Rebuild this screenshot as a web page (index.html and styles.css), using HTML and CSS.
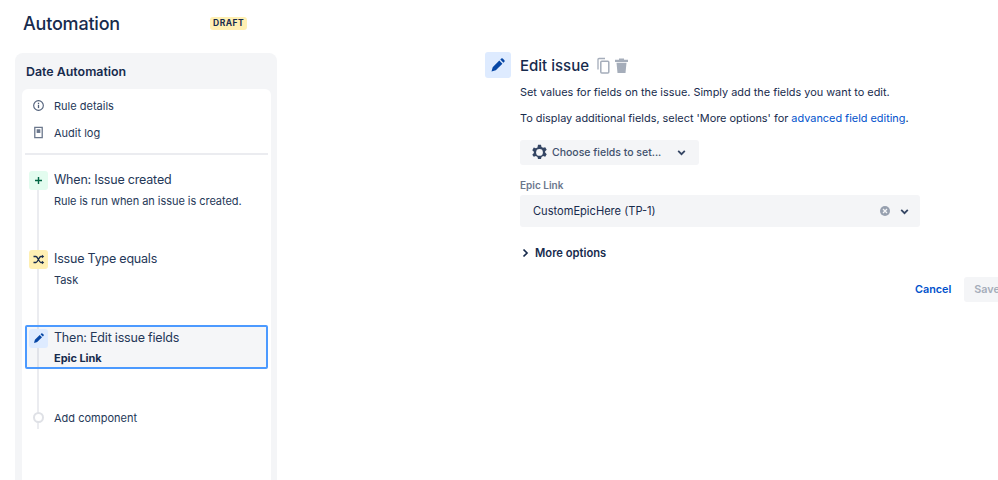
FILE: index.html
```html
<!DOCTYPE html>
<html lang="en">
<head>
<meta charset="utf-8">
<title>Automation</title>
<link rel="stylesheet" href="styles.css">
</head>
<body>
<div class="page">
  <aside class="left">
    <header class="head">
      <h1 class="title">Automation</h1>
      <span class="badge">DRAFT</span>
    </header>
    <section class="sidebar">
      <h2 class="rule-name">Date Automation</h2>
      <div class="panel">
        <div class="nav-row">
          <svg class="nav-icon" viewBox="0 0 14 14"><circle cx="7" cy="7" r="5.200" fill="none" stroke="#505f79" stroke-width="1.200"/><rect x="6.300" y="6.200" width="1.400" height="3.600" fill="#505f79"/><rect x="6.300" y="4" width="1.400" height="1.400" fill="#505f79"/></svg>
          <span>Rule details</span>
        </div>
        <div class="nav-row">
          <svg class="nav-icon" viewBox="0 0 14 14"><path d="M3 1.500h8v11H3z" fill="none" stroke="#6b778c" stroke-width="1.400"/><path d="M5 3.500h4v4H5z" fill="#6b778c"/></svg>
          <span>Audit log</span>
        </div>
        <hr class="divider">
        <div class="steps">
          <div class="rail"></div>
          <div class="step step-when">
            <span class="step-icon ic-green"><svg viewBox="0 0 19 19" width="19" height="19"><path d="M9.500 6v7M6 9.500h7" stroke="#006644" stroke-width="1.400" fill="none"/></svg></span>
            <div class="step-text">
              <div class="step-title">When: Issue created</div>
              <div class="step-sub">Rule is run when an issue is created.</div>
            </div>
          </div>
          <div class="step step-cond">
            <span class="step-icon ic-yellow"><svg viewBox="0 0 19 19" width="19" height="19"><path d="M4.500 6.500h2.500c1.800 0 3 6 4.800 6h1.700M4.500 12.500h2.500c1.800 0 3-6 4.800-6h1.700" stroke="#172b4d" stroke-width="1.300" fill="none"/><path d="M13 4.700 15.200 6.500 13 8.300zM13 10.700 15.200 12.500 13 14.300z" fill="#172b4d"/></svg></span>
            <div class="step-text">
              <div class="step-title">Issue Type equals</div>
              <div class="step-sub">Task</div>
            </div>
          </div>
          <div class="step step-then">
            <span class="step-icon ic-blue"><svg viewBox="0 0 19 19" width="19" height="19"><path d="M5 14l.9-3.200 4.800-4.800 2.300 2.300-4.800 4.800zM11.500 5.200l.8-.8a.8.800 0 0 1 1.100 0l1.200 1.200a.8.800 0 0 1 0 1.100l-.8.800z" fill="#0747a6"/></svg></span>
            <div class="step-text">
              <div class="step-title">Then: Edit issue fields</div>
              <div class="step-sub step-strong">Epic Link</div>
            </div>
          </div>
          <div class="step step-add">
            <span class="add-dot"></span>
            <div class="step-sub">Add component</div>
          </div>
        </div>
      </div>
    </section>
  </aside>
  <main class="right">
    <div class="editor-head">
      <span class="big-icon"><svg viewBox="0 0 26 26" width="26" height="26"><path d="M6.500 19.500l1.200-4.300 6.600-6.600 3.100 3.100-6.600 6.600zM15.300 7.600l1-1a1 1 0 0 1 1.400 0l1.700 1.700a1 1 0 0 1 0 1.400l-1 1z" fill="#0747a6"/></svg></span>
      <h2 class="editor-title">Edit issue</h2>
      <svg class="tool" viewBox="0 0 15 17"><path d="M2 12.500V2.500a1 1 0 0 1 1-1h6" fill="none" stroke="#a5adba" stroke-width="1.300"/><rect x="4.800" y="4.200" width="8" height="11.800" rx="1" fill="none" stroke="#a5adba" stroke-width="1.500"/></svg>
      <svg class="tool" viewBox="0 0 15 17"><path d="M1 2.800h13v2.200H1zM5 1.500h5v1.500H5zM2.500 5.800h10l-1 10.200h-8z" fill="#a5adba"/></svg>
    </div>
    <div class="editor-body">
      <p class="copy copy-1">Set values for fields on the issue. Simply add the fields you want to edit.</p>
      <p class="copy copy-2">To display additional fields, select 'More options' for <a class="link">advanced field editing</a>.</p>
      <div class="choose">
        <svg class="gear" viewBox="0 0 16 16"><path d="M6.600.8h2.800l.5 2 1.500.8 2-.6 1.400 2.400-1.500 1.500v1.200l1.500 1.500-1.400 2.400-2-.6-1.500.8-.5 2H6.600l-.5-2-1.500-.8-2 .6L1.200 10l1.500-1.500V7.300L1.200 5.800 2.600 3.400l2 .6 1.500-.8z" fill="#344563"/><circle cx="8" cy="7.900" r="3.200" fill="#f4f5f7"/></svg>
        <span>Choose fields to set...</span>
        <svg class="chev" viewBox="0 0 10 10"><path d="M2 3.500 5 6.500 8 3.500" fill="none" stroke="#344563" stroke-width="1.600"/></svg>
      </div>
      <label class="field-label">Epic Link</label>
      <div class="select">
        <span class="select-value">CustomEpicHere (TP-1)</span>
        <svg class="clear" viewBox="0 0 12 12"><circle cx="6" cy="6" r="5" fill="#97a0af"/><path d="M4 4l4 4M8 4l-4 4" stroke="#f4f5f7" stroke-width="1.300"/></svg>
        <svg class="chev" viewBox="0 0 10 10"><path d="M2 3.500 5 6.500 8 3.500" fill="none" stroke="#344563" stroke-width="1.600"/></svg>
      </div>
      <div class="more">
        <svg class="more-chev" viewBox="0 0 10 10"><path d="M3.500 1.500 7 5 3.500 8.500" fill="none" stroke="#172b4d" stroke-width="1.700"/></svg>
        <span>More options</span>
      </div>
      <div class="actions">
        <span class="cancel">Cancel</span>
        <span class="save">Save</span>
      </div>
    </div>
  </main>
</div>
</body>
</html>
```

FILE: styles.css
```css
* { box-sizing: border-box; }
html, body { margin: 0; height: 100%; overflow: hidden; background: #fff; }
body { font-family: Inter, "Liberation Sans", sans-serif; color: #172b4d; }
.page { display: flex; width: 998px; height: 480px; overflow: hidden; }

.left { width: 277px; margin-left: 15px; flex: none; }
.head { display: flex; align-items: center; height: 53px; padding: 0 0 6px 8px; }
.title { margin: 0; font-size: 18px; font-weight: 500; letter-spacing: -.2px; width: 187px; }
.badge { background: #fff0b3; color: #172b4d; border-radius: 3px; font-size: 8.500px; font-weight: 700; letter-spacing: .5px; padding: 2px 3px; line-height: 9px; width: 37px; text-align: center; margin-top: -1px; }

.sidebar { background: #f4f5f7; border-radius: 8px 8px 0 0; width: 262px; height: 427px; padding: 0 6px 0 7px; }
.rule-name { margin: 0; font-size: 12.400px; font-weight: 600; height: 36px; line-height: 38px; padding-left: 4px; }
.panel { background: #fff; border-radius: 6px 6px 0 0; height: 391px; padding-top: 3px; }
.nav-row { display: flex; align-items: center; height: 27px; font-size: 11px; color: #253858; padding-left: 10px; gap: 9px; }
.nav-icon { width: 13px; height: 13px; flex: none; }
.divider { border: 0; height: 1.500px; background: #ebecf0; margin: 7px 3px 0; }

.steps { position: relative; padding: 0 3px; }
.rail { position: absolute; left: 14.500px; top: 18px; width: 2px; height: 240px; background: #ebecf0; }
.step { position: relative; display: flex; gap: 6px; padding-left: 4px; }
.step-when { margin-top: 16px; height: 79px; }
.step-cond { height: 75px; }
.step-then { height: 44px; padding-left: 2px; padding-top: 2px; background: rgba(9, 30, 66, .04); border: 2px solid #4c9aff; border-radius: 2px; align-items: flex-start; }
.step-add { margin-top: 41px; align-items: center; gap: 10px; padding-left: 8px; height: 16px; }
.step-icon { width: 19px; height: 19px; border-radius: 3px; flex: none; display: block; }
.step-icon svg { display: block; }
.ic-green { background: #e3fcef; }
.ic-yellow { background: #fff0b3; }
.ic-blue { background: #deebff; }
.step-title { font-size: 12.500px; letter-spacing: -.2px; line-height: 18px; color: #253858; }
.step-sub { font-size: 11px; letter-spacing: -.05px; line-height: 16px; color: #253858; margin-top: 4px; }
.step-add .step-sub { margin-top: 0; letter-spacing: 0; }
.step-then .step-strong { font-weight: 700; color: #172b4d; margin-top: 3px; }
.add-dot { width: 11px; height: 11px; border: 2px solid #dfe1e6; background: #fff; border-radius: 50%; flex: none; }

.right { margin-left: 193px; padding-top: 52px; width: 513px; flex: none; }
.editor-head { display: flex; align-items: center; height: 26px; }
.big-icon { width: 26px; height: 26px; background: #deebff; border-radius: 3px; flex: none; }
.big-icon svg { display: block; }
.editor-title { margin: 0 0 0 9px; font-size: 15px; font-weight: 500; }
.tool { width: 15px; height: 17px; margin-left: 7px; }
.tool + .tool { margin-left: 3px; }
.editor-body { padding-left: 35px; }
.copy { margin: 0; font-size: 10.900px; line-height: 20px; color: #172b4d; }
.copy-1 { margin-top: 4px; }
.copy-2 { margin-top: 6px; }
.link { color: #0052cc; }
.choose { display: flex; align-items: center; width: 179px; height: 25px; background: #f4f5f7; border-radius: 3px; margin-top: 12px; padding-left: 11px; font-size: 10.500px; color: #42526e; font-weight: 500; }
.gear { width: 17px; height: 17px; margin-right: 4px; flex: none; }
.choose .chev { width: 11px; height: 11px; margin-left: 15px; }
.field-label { display: block; margin-top: 14px; font-size: 10px; font-weight: 600; color: #6b778c; line-height: 12px; }
.select { display: flex; align-items: center; width: 400px; height: 32px; background: #f4f5f7; border-radius: 3px; margin-top: 4px; padding: 0 10px 0 13px; }
.select-value { flex: 1; font-size: 11.100px; color: #172b4d; }
.clear { width: 12px; height: 12px; margin-right: 8px; }
.select .chev { width: 11px; height: 11px; }
.more { display: flex; align-items: center; gap: 5px; margin-top: 18px; font-size: 11.200px; font-weight: 600; height: 16px; }
.more-chev { width: 10px; height: 10px; }
.actions { display: flex; align-items: center; margin-top: 16px; padding-left: 395px; }
.cancel { color: #0052cc; font-size: 10.800px; font-weight: 600; }
.save { margin-left: 13px; background: #f4f5f7; color: #a5adba; font-size: 10.800px; font-weight: 600; height: 25px; line-height: 25px; padding: 0 10px; border-radius: 3px; }
```
